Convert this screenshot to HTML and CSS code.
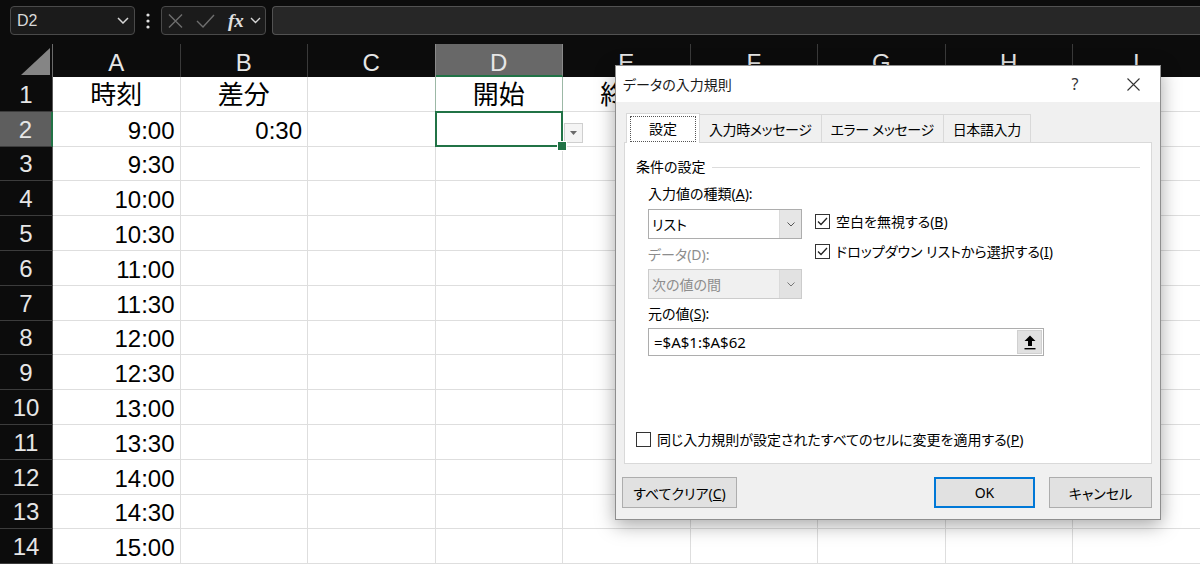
FILE: index.html
```html
<!DOCTYPE html>
<html lang="ja">

<head>
  <meta charset="UTF-8">
  <title>データの入力規則</title>
  <link rel="stylesheet" href="styles.css">
</head>

<body>
  <div class="formulabar">
    <div class="namebox">
      <span>D2</span>
      <svg width="12" height="7" viewBox="0 0 12 7"><path d="M1 1 L6 6 L11 1" fill="none" stroke="#d6d6d6" stroke-width="1.5"/></svg>
    </div>
    <div class="grip">
      <svg width="4" height="16" viewBox="0 0 4 16"><circle cx="2" cy="2" r="1.6" fill="#e0e0e0"/><circle cx="2" cy="8" r="1.6" fill="#e0e0e0"/><circle cx="2" cy="14" r="1.6" fill="#e0e0e0"/></svg>
    </div>
    <div class="fxbox">
      <svg class="fx-cancel" width="15" height="14" viewBox="0 0 15 14"><path d="M1 0.5 L14 13.5 M14 0.5 L1 13.5" stroke="#6e6e6e" stroke-width="1.4"/></svg>
      <svg class="fx-enter" width="19" height="14" viewBox="0 0 19 14"><path d="M1 7 L7 13 L18 1" fill="none" stroke="#6e6e6e" stroke-width="1.4"/></svg>
      <span class="fx-label">fx</span>
      <svg class="fx-more" width="11" height="7" viewBox="0 0 11 7"><path d="M1 1 L5.5 5.5 L10 1" fill="none" stroke="#d6d6d6" stroke-width="1.4"/></svg>
    </div>
    <div class="formula"></div>
  </div>

  <div class="sheet">
    <div class="corner"><svg width="29" height="27" viewBox="0 0 29 27"><polygon points="29,0 29,27 0,27" fill="#858585"/></svg></div>
    <div class="ch">A</div><div class="ch">B</div><div class="ch">C</div><div class="ch act">D</div><div class="ch">E</div><div class="ch">F</div><div class="ch">G</div><div class="ch">H</div><div class="ch">I</div>

    <div class="rh">1</div><div class="c ctr">時刻</div><div class="c ctr">差分</div><div class="c"></div><div class="c ctr colsel">開始</div><div class="c ctr">終了</div><div class="c"></div><div class="c"></div><div class="c"></div><div class="c"></div>
    <div class="rh act">2</div><div class="c">9:00</div><div class="c">0:30</div><div class="c"></div><div class="c sel"><span class="dd"><svg width="7" height="4" viewBox="0 0 7 4"><polygon points="0,0 7,0 3.5,4" fill="#6a6a6a"/></svg></span></div><div class="c"></div><div class="c"></div><div class="c"></div><div class="c"></div><div class="c"></div>
    <div class="rh">3</div><div class="c">9:30</div><div class="c"></div><div class="c"></div><div class="c"></div><div class="c"></div><div class="c"></div><div class="c"></div><div class="c"></div><div class="c"></div>
    <div class="rh">4</div><div class="c">10:00</div><div class="c"></div><div class="c"></div><div class="c"></div><div class="c"></div><div class="c"></div><div class="c"></div><div class="c"></div><div class="c"></div>
    <div class="rh">5</div><div class="c">10:30</div><div class="c"></div><div class="c"></div><div class="c"></div><div class="c"></div><div class="c"></div><div class="c"></div><div class="c"></div><div class="c"></div>
    <div class="rh">6</div><div class="c">11:00</div><div class="c"></div><div class="c"></div><div class="c"></div><div class="c"></div><div class="c"></div><div class="c"></div><div class="c"></div><div class="c"></div>
    <div class="rh">7</div><div class="c">11:30</div><div class="c"></div><div class="c"></div><div class="c"></div><div class="c"></div><div class="c"></div><div class="c"></div><div class="c"></div><div class="c"></div>
    <div class="rh">8</div><div class="c">12:00</div><div class="c"></div><div class="c"></div><div class="c"></div><div class="c"></div><div class="c"></div><div class="c"></div><div class="c"></div><div class="c"></div>
    <div class="rh">9</div><div class="c">12:30</div><div class="c"></div><div class="c"></div><div class="c"></div><div class="c"></div><div class="c"></div><div class="c"></div><div class="c"></div><div class="c"></div>
    <div class="rh">10</div><div class="c">13:00</div><div class="c"></div><div class="c"></div><div class="c"></div><div class="c"></div><div class="c"></div><div class="c"></div><div class="c"></div><div class="c"></div>
    <div class="rh">11</div><div class="c">13:30</div><div class="c"></div><div class="c"></div><div class="c"></div><div class="c"></div><div class="c"></div><div class="c"></div><div class="c"></div><div class="c"></div>
    <div class="rh">12</div><div class="c">14:00</div><div class="c"></div><div class="c"></div><div class="c"></div><div class="c"></div><div class="c"></div><div class="c"></div><div class="c"></div><div class="c"></div>
    <div class="rh">13</div><div class="c">14:30</div><div class="c"></div><div class="c"></div><div class="c"></div><div class="c"></div><div class="c"></div><div class="c"></div><div class="c"></div><div class="c"></div>
    <div class="rh">14</div><div class="c">15:00</div><div class="c"></div><div class="c"></div><div class="c"></div><div class="c"></div><div class="c"></div><div class="c"></div><div class="c"></div><div class="c"></div>
  </div>

  <div class="dialog">
    <div class="dlg-title">
      <span class="dlg-name">データの入力規則</span>
      <span class="dlg-help">?</span>
      <span class="dlg-close"><svg width="13" height="13" viewBox="0 0 13 13"><path d="M0.5 0.5 L12.5 12.5 M12.5 0.5 L0.5 12.5" stroke="#333" stroke-width="1.1"/></svg></span>
    </div>
    <div class="dlg-body">
      <div class="tabs">
        <div class="tab active"><span class="focus">設定</span></div>
        <div class="tab">入力時メッセージ</div>
        <div class="tab">エラー メッセージ</div>
        <div class="tab">日本語入力</div>
      </div>
      <div class="panel">
        <div class="group">条件の設定</div>
        <div class="indent">
          <div class="criteria">
            <div class="criteria-left">
              <div class="label">入力値の種類(<u>A</u>):</div>
              <div class="select">
                <span>リスト</span>
                <span class="select-btn"><svg width="8" height="5" viewBox="0 0 8 5"><path d="M0.5 0.5 L4 4 L7.5 0.5" fill="none" stroke="#555" stroke-width="1"/></svg></span>
              </div>
              <div class="label disabled label-data">データ(D):</div>
              <div class="select disabled">
                <span>次の値の間</span>
                <span class="select-btn"><svg width="8" height="5" viewBox="0 0 8 5"><path d="M0.5 0.5 L4 4 L7.5 0.5" fill="none" stroke="#777" stroke-width="1"/></svg></span>
              </div>
            </div>
            <div class="criteria-right">
              <div class="check">
                <span class="box"><svg width="13" height="13" viewBox="0 0 13 13"><path d="M2 6.5 L5 9.5 L11 3" fill="none" stroke="#222" stroke-width="1.3"/></svg></span>
                <span>空白を無視する(<u>B</u>)</span>
              </div>
              <div class="check">
                <span class="box"><svg width="13" height="13" viewBox="0 0 13 13"><path d="M2 6.5 L5 9.5 L11 3" fill="none" stroke="#222" stroke-width="1.3"/></svg></span>
                <span>ドロップダウン リストから選択する(<u>I</u>)</span>
              </div>
            </div>
          </div>
          <div class="label label-source">元の値(<u>S</u>):</div>
          <div class="source">
            <span>=$A$1:$A$62</span>
            <span class="ref-btn"><svg width="12" height="15" viewBox="0 0 12 15"><path d="M6 0.5 L11.5 6 H8 V11 H4 V6 H0.5 Z" fill="#000"/><rect x="0.5" y="13" width="11" height="1.4" fill="#000"/></svg></span>
          </div>
        </div>
        <div class="check apply">
          <span class="box"></span>
          <span>同じ入力規則が設定されたすべてのセルに変更を適用する(<u>P</u>)</span>
        </div>
      </div>
      <div class="dlg-footer">
        <button class="btn btn-clear">すべてクリア(<u>C</u>)</button>
        <button class="btn btn-ok">OK</button>
        <button class="btn btn-cancel">キャンセル</button>
      </div>
    </div>
  </div>
</body>

</html>
```

FILE: styles.css
```css
* {
  box-sizing: border-box;
}

body {
  margin: 0;
  width: 1200px;
  height: 564px;
  overflow: hidden;
  position: relative;
  background-color: #0c0c0c;
  font-family: "Liberation Sans", "Noto Sans CJK JP", sans-serif;
}

/* formula bar */

.formulabar {
  height: 44px;
  display: flex;
  align-items: flex-start;
  padding: 6px 0 0 10px;
}

.namebox {
  width: 125px;
  height: 29px;
  border: 1px solid #4a4a4a;
  border-radius: 4px;
  background-color: #1b1b1b;
  color: #d8d8d8;
  font-size: 16px;
  display: flex;
  align-items: center;
  justify-content: space-between;
  padding: 0 5px 0 6px;
}

.grip {
  width: 26px;
  height: 29px;
  display: flex;
  align-items: center;
  justify-content: center;
}

.fxbox {
  width: 105px;
  height: 29px;
  border: 1px solid #4a4a4a;
  border-radius: 4px;
  background-color: #1b1b1b;
  display: flex;
  align-items: center;
  padding-left: 6px;
}

.fx-enter {
  margin-left: 13px;
}

.fx-label {
  margin-left: 13px;
  color: #e0e0e0;
  font-family: "Liberation Serif", serif;
  font-style: italic;
  font-weight: bold;
  font-size: 19px;
  line-height: 1;
}

.fx-more {
  margin-left: 6px;
}

.formula {
  flex: 1;
  height: 29px;
  margin-left: 6px;
  border: 1px solid #525252;
  border-right: none;
  border-radius: 4px 0 0 4px;
  background-color: #272727;
}

/* sheet */

.sheet {
  display: grid;
  grid-template-columns: 53px repeat(9, 127.5px);
  grid-template-rows: 33px;
  grid-auto-rows: 34.8px;
}

.corner {
  display: flex;
  align-items: flex-end;
  justify-content: flex-end;
  padding: 0 2px 2px 0;
  border-right: 1px solid #6a6a6a;
}

.ch {
  color: #e6e6e6;
  font-size: 24px;
  display: flex;
  align-items: center;
  justify-content: center;
  padding-top: 4px;
  border-right: 1px solid #3a3a3a;
}

.ch.act {
  background-color: #686868;
  border-right-color: #8a8a8a;
  border-bottom: 2px solid #217346;
  box-shadow: -1px 0 0 #8a8a8a;
  padding-top: 6px;
}

.rh {
  color: #e6e6e6;
  font-size: 24px;
  display: flex;
  align-items: flex-end;
  justify-content: center;
  padding-bottom: 2px;
  border-bottom: 1px solid #3c3c3c;
  border-right: 1px solid #5a5a5a;
}

.rh.act {
  background-color: #5e5e5e;
  border-right: 2px solid #217346;
}

.c {
  background-color: #fff;
  color: #000;
  font-size: 24px;
  line-height: 24px;
  display: flex;
  align-items: flex-end;
  justify-content: flex-end;
  padding: 0 5px 3px 0;
  border-right: 1px solid #dedede;
  border-bottom: 1px solid #dedede;
}

.c.ctr {
  justify-content: center;
  padding-right: 0;
  font-size: 26px;
  line-height: 26px;
  padding-bottom: 3px;
}

.c.colsel {
  border-right-color: #9cb8a6;
  box-shadow: -1px 0 0 #9cb8a6;
}

.c.sel {
  position: relative;
}

.c.sel::before {
  content: "";
  position: absolute;
  top: -1px;
  left: -1px;
  right: -1px;
  bottom: -1px;
  border: 2px solid #217346;
}

.c.sel::after {
  content: "";
  position: absolute;
  right: -5px;
  bottom: -5px;
  width: 8px;
  height: 8px;
  background-color: #217346;
  border: 1px solid #fff;
}

.dd {
  position: absolute;
  left: calc(100% + 2px);
  top: 11px;
  width: 19px;
  height: 20px;
  background-color: #f4f4f4;
  border: 1px solid #cfcfcf;
  display: flex;
  align-items: center;
  justify-content: center;
}

/* dialog */

.dialog {
  position: absolute;
  left: 615px;
  top: 65px;
  width: 546px;
  height: 455px;
  background-color: #f0f0f0;
  border: 1px solid #8e8e8e;
  box-shadow: 0 5px 18px rgba(0, 0, 0, 0.35);
  font-family: "Noto Sans", "Noto Sans CJK JP", sans-serif;
  font-size: 14px;
  font-feature-settings: "palt";
  color: #000;
  display: flex;
  flex-direction: column;
}

.dlg-title {
  height: 36px;
  background-color: #fff;
  display: flex;
  align-items: center;
  padding-left: 7px;
}

.dlg-name {
  flex: 1;
  color: #1a1a1a;
}

.dlg-help {
  width: 40px;
  text-align: center;
  color: #333;
  font-size: 16px;
  margin-right: 16px;
}

.dlg-close {
  width: 44px;
  margin-right: 5px;
  display: flex;
  justify-content: center;
}

.dlg-body {
  flex: 1;
  padding: 11px 8px 0 8px;
  display: flex;
  flex-direction: column;
}

.tabs {
  display: flex;
  align-items: flex-end;
  height: 29px;
  padding-left: 2px;
}

.tab {
  height: 28px;
  padding: 0 9px;
  border: 1px solid #d9d9d9;
  border-bottom: none;
  margin-left: -1px;
  background-color: #f0f0f0;
  display: flex;
  align-items: center;
  white-space: nowrap;
  letter-spacing: -0.4px;
}

.tab.active {
  margin-left: 0;
  padding: 0 3px;
  background-color: #fff;
  position: relative;
  z-index: 1;
  margin-bottom: -1px;
  height: 30px;
  letter-spacing: 0;
}

.focus {
  border: 1px dotted #555;
  padding: 2px 18px;
  line-height: 20px;
}

.panel {
  height: 322px;
  background-color: #fff;
  border: 1px solid #d9d9d9;
  padding: 0 11px;
}

.group {
  display: flex;
  align-items: center;
  gap: 6px;
  margin-top: 14px;
  height: 20px;
  line-height: 20px;
}

.group::after {
  content: "";
  flex: 1;
  border-top: 1px solid #dcdcdc;
}

.indent {
  margin-left: 12px;
}

.label {
  height: 20px;
  line-height: 20px;
  white-space: nowrap;
}

.label.disabled {
  color: #8d8d8d;
}

.criteria {
  display: flex;
  margin-top: 7px;
}

.criteria-left {
  width: 154px;
}

.criteria-right {
  margin-left: 13px;
  padding-top: 27px;
  display: flex;
  flex-direction: column;
  gap: 10px;
}

.select {
  margin-top: 5px;
  height: 30px;
  background-color: #fff;
  border: 1px solid #adadad;
  display: flex;
  align-items: center;
  justify-content: space-between;
  padding-left: 3px;
}

.select.disabled {
  margin-top: 4px;
  background-color: #f0f0f0;
  border-color: #cccccc;
  color: #8d8d8d;
}

.select-btn {
  width: 22px;
  height: 28px;
  background-color: #e6e6e6;
  border-left: 1px solid #dadada;
  display: flex;
  align-items: center;
  justify-content: center;
}

.select.disabled .select-btn {
  background-color: #e2e2e2;
}

.label-data {
  margin-top: 6px;
}

.label-source {
  margin-top: 5px;
}

.source {
  margin-top: 4px;
  width: 396px;
  height: 28px;
  border: 1px solid #adadad;
  background-color: #fff;
  display: flex;
  align-items: center;
  justify-content: space-between;
  padding: 0 1px 0 5px;
  font-size: 15px;
}

.ref-btn {
  width: 25px;
  height: 24px;
  background-color: #e1e1e1;
  border: 1px solid #d0d0d0;
  display: flex;
  align-items: center;
  justify-content: center;
}

.check {
  display: flex;
  align-items: center;
  height: 20px;
  white-space: nowrap;
}

.box {
  width: 15px;
  height: 15px;
  border: 1px solid #333;
  background-color: #fff;
  margin-right: 6px;
  display: flex;
}

.check.apply {
  margin-top: 73px;
}

.dlg-footer {
  display: flex;
  margin-top: 13px;
  margin-left: -2px;
}

.btn {
  height: 31px;
  font: inherit;
  color: #000;
  background-color: #e1e1e1;
  border: 1px solid #adadad;
  padding: 0;
}

.btn-clear {
  width: 115px;
}

.btn-ok {
  width: 101px;
  margin-left: auto;
  border-color: #0078d7;
  box-shadow: inset 0 0 0 1px #0078d7;
}

.btn-cancel {
  width: 103px;
  margin-left: 14px;
}
```
